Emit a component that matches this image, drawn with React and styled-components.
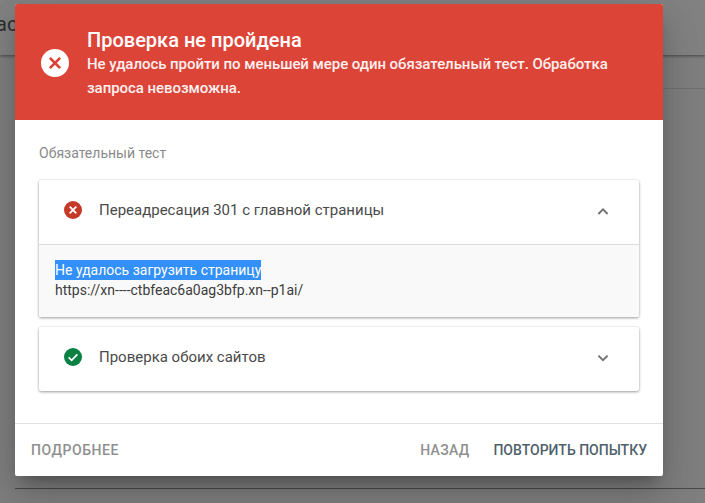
import React from 'react';
import styled, { createGlobalStyle } from 'styled-components';

const GlobalStyle = createGlobalStyle`
  html, body {
    margin: 0;
    padding: 0;
    background: #7f7f7f;
  }
  body {
    font-family: Roboto, "Noto Sans", sans-serif;
  }
`;

const Page = styled.div`
  position: relative;
  width: 705px;
  height: 503px;
  overflow: hidden;
  background: #7f7f7f;
`;

// Greyed-out page behind the dialog
const TopBar = styled.div`
  height: 55px;
  background: #828282;
  box-shadow: 0 1px 3px rgba(0, 0, 0, 0.45);
  font-size: 20px;
  line-height: 48px;
  color: #2e2e2e;
  text-indent: -4px;
`;

const BackPanel = styled.div`
  margin: 33px 0 0 15px;
  height: 399px;
  background: #7f7f7f;
  border-top: 1px solid #727272;
  border-bottom: 1px solid #4a4a4a;
`;

const Dialog = styled.div`
  position: absolute;
  top: 4px;
  left: 15px;
  width: 648px;
  height: 472px;
  display: flex;
  flex-direction: column;
  background: #fff;
  border-radius: 2px;
  box-shadow: 0 11px 15px -7px rgba(0, 0, 0, 0.3), 0 24px 38px 3px rgba(0, 0, 0, 0.1), 0 9px 46px 8px rgba(0, 0, 0, 0.08);
`;

const Banner = styled.div`
  height: 116px;
  flex: none;
  display: flex;
  align-items: flex-start;
  box-sizing: border-box;
  padding: 24px 24px 0 26px;
  gap: 18px;
  background: #dd4438;
  border-radius: 2px 2px 0 0;
  color: #fff;
`;

const BannerIcon = styled.svg`
  width: 28px;
  height: 28px;
  flex: none;
  margin-top: 21px;
`;

const BannerTitle = styled.div`
  font-size: 20px;
  font-weight: 500;
  line-height: 24px;
`;

const BannerText = styled.div`
  font-size: 15px;
  font-weight: 500;
  line-height: 24px;
  letter-spacing: -0.05px;
  width: 530px;
  color: #fdf0ef;
`;

const Body = styled.div`
  flex: 1;
  box-sizing: border-box;
  padding: 24px 24px 0;
  display: flex;
  flex-direction: column;
`;

const SectionLabel = styled.div`
  font-size: 14px;
  line-height: 18px;
  color: #8a8a8a;
  margin-bottom: 18px;
`;

const Card = styled.div`
  background: #fff;
  margin-bottom: 10px;
  border-radius: 2px;
  box-shadow: 0 1px 3px rgba(0, 0, 0, 0.38), 0 0 2px rgba(0, 0, 0, 0.08);
`;

const CardHead = styled.div`
  height: 64px;
  box-sizing: border-box;
  padding: 0 28px 5px 25px;
  display: flex;
  align-items: center;
  gap: 17px;
  font-size: 15px;
  color: #4a4a4a;
`;

const CardTitle = styled.div`
  flex: 1;
`;

const StatusIcon = styled.svg`
  width: 18px;
  height: 18px;
  flex: none;
`;

const Chevron = styled.svg`
  width: 24px;
  height: 24px;
  flex: none;
  margin: 3px -4px 0 0;
`;

const Detail = styled.div`
  height: 73px;
  box-sizing: border-box;
  padding: 15px 16px 0;
  border-top: 1px solid #dcdcdc;
  background: #f9f9f9;
  border-radius: 0 0 2px 2px;
  font-size: 14px;
  line-height: 20px;
  color: #3c3c3c;
`;

const Selected = styled.span`
  display: inline-block;
  background: #3390f8;
  color: #fff;
`;

const Footer = styled.div`
  height: 53px;
  flex: none;
  box-sizing: border-box;
  border-top: 1px solid #e0e0e0;
  display: flex;
  align-items: center;
  padding: 0 16px;
  gap: 24px;
`;

const FooterButton = styled.div`
  font-size: 14px;
  font-weight: 500;
  letter-spacing: ${({ $primary }) => ($primary ? '0' : '0.3px')};
  color: ${({ $primary }) => ($primary ? '#4f5f6b' : '#8f8f8f')};
  &:first-child {
    margin-right: auto;
    letter-spacing: 0.55px;
  }
`;

const CrossIcon = ({ as: Svg, circle, cross }) => (
  <Svg viewBox="0 0 24 24">
    <circle cx="12" cy="12" r="12" fill={circle} />
    <path d="M7.6 7.6l8.8 8.8M16.4 7.6l-8.8 8.8" stroke={cross} strokeWidth="2.4" fill="none" />
  </Svg>
);

const CheckIcon = () => (
  <StatusIcon viewBox="0 0 24 24">
    <circle cx="12" cy="12" r="12" fill="#0b8043" />
    <path d="M6.2 12.4l4 4 7.6-8" stroke="#fff" strokeWidth="2.4" fill="none" />
  </StatusIcon>
);

const ChevronIcon = ({ up }) => (
  <Chevron viewBox="0 0 24 24">
    <path
      d={up ? 'M7.4 15L12 10.4 16.6 15' : 'M7.4 9.6L12 14.2l4.6-4.6'}
      stroke="#757575"
      strokeWidth="2"
      fill="none"
    />
  </Chevron>
);

export default function App() {
  return (
    <Page>
      <GlobalStyle />
      <TopBar>ас</TopBar>
      <BackPanel />
      <Dialog>
        <Banner>
          <CrossIcon as={BannerIcon} circle="#fff" cross="#dd4438" />
          <div>
            <BannerTitle>Проверка не пройдена</BannerTitle>
            <BannerText>
              Не удалось пройти по меньшей мере один обязательный тест. Обработка запроса невозможна.
            </BannerText>
          </div>
        </Banner>
        <Body>
          <SectionLabel>Обязательный тест</SectionLabel>
          <Card>
            <CardHead>
              <CrossIcon as={StatusIcon} circle="#c53929" cross="#fff" />
              <CardTitle>Переадресация 301 с главной страницы</CardTitle>
              <ChevronIcon up />
            </CardHead>
            <Detail>
              <Selected>Не удалось загрузить страницу</Selected>
              <br />
              https://xn----ctbfeac6a0ag3bfp.xn--p1ai/
            </Detail>
          </Card>
          <Card>
            <CardHead>
              <CheckIcon />
              <CardTitle>Проверка обоих сайтов</CardTitle>
              <ChevronIcon />
            </CardHead>
          </Card>
        </Body>
        <Footer>
          <FooterButton>ПОДРОБНЕЕ</FooterButton>
          <FooterButton>НАЗАД</FooterButton>
          <FooterButton $primary>ПОВТОРИТЬ ПОПЫТКУ</FooterButton>
        </Footer>
      </Dialog>
    </Page>
  );
}
